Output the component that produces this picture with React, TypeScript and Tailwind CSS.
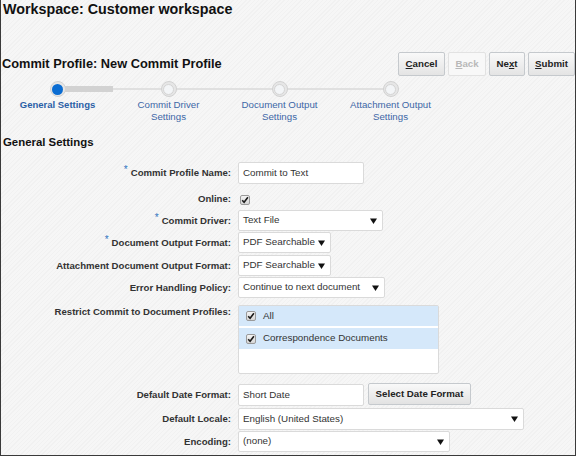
import React from "react";

const font = { fontFamily: '"Liberation Sans", Arial, sans-serif' };

function Arrow() {
  return (
    <svg width="7" height="6" viewBox="0 0 7 6" className="shrink-0">
      <path d="M0 0.5 L7 0.5 L3.5 6 Z" fill="#111" />
    </svg>
  );
}

function Check({ size = 10 }: { size?: number }) {
  return (
    <span
      className="inline-flex items-center justify-center rounded-[2px] border border-[#9a9a9a] bg-gradient-to-b from-[#f4f4f4] to-[#d6d6d6]"
      style={{ width: size, height: size }}
    >
      <svg width="8" height="8" viewBox="0 0 8 8">
        <path d="M1.2 4.2 L3.1 6.2 L6.9 1.3" fill="none" stroke="#1a1a1a" strokeWidth="1.6" />
      </svg>
    </span>
  );
}

function Label({ text, required, top }: { text: string; required?: boolean; top?: boolean }) {
  return (
    <div
      className={`flex w-[230px] shrink-0 justify-end text-[9.6px] font-bold leading-[12px] text-[#333] ${
        top ? "self-start pt-[1px]" : ""
      }`}
    >
      {required ? <span className="mr-[3px] -translate-y-[3px] text-[10px] font-normal text-[#2f74c0]">*</span> : null}
      <span>{text}</span>
    </div>
  );
}

function TextBox({ value, width }: { value: string; width: string }) {
  return (
    <div
      className={`${width} flex h-full items-center rounded-[2px] border border-[#dadada] bg-white px-[4px] text-[9.8px] text-[#333]`}
    >
      {value}
    </div>
  );
}

function Select({ value, width }: { value: string; width: string }) {
  return (
    <div
      className={`${width} flex h-full items-center justify-between rounded-[2px] border border-[#dadada] bg-white pl-[4px] pr-[5px] text-[9.8px] text-[#333]`}
    >
      <span>{value}</span>
      <Arrow />
    </div>
  );
}

function Row({ children, className }: { children: React.ReactNode; className: string }) {
  return <div className={`flex items-center gap-[7px] ${className}`}>{children}</div>;
}

function Btn({ label, u, disabled, w }: { label: string; u: number; disabled?: boolean; w: string }) {
  return (
    <div
      className={`${w} flex h-[24px] items-center justify-center rounded-[2px] border text-[9.7px] font-bold ${
        disabled
          ? "border-[#e2e2e2] bg-[#f8f8f8] text-[#b8b8b8]"
          : "border-[#c5c9cd] bg-gradient-to-b from-[#f9f9f9] to-[#e4e4e4] text-[#222]"
      }`}
    >
      {label.slice(0, u)}
      <span className="underline">{label[u]}</span>
      {label.slice(u + 1)}
    </div>
  );
}

const steps = [
  ["General Settings"],
  ["Commit Driver", "Settings"],
  ["Document Output", "Settings"],
  ["Attachment Output", "Settings"],
];

export default function App() {
  return (
    <div
      style={font}
      className="h-[456px] w-[576px] overflow-hidden border-x border-b border-[#3a3a3a] bg-[#f4f4f4] bg-[repeating-linear-gradient(135deg,#f6f6f6_0px,#f6f6f6_2px,#f1f1f1_2px,#f1f1f1_3px)]"
    >
      <h1 className="pl-[2px] pt-[1px] text-[14.3px] font-bold leading-[17px] text-[#111]">
        Workspace: Customer workspace
      </h1>

      <div className="mt-[34px] flex items-center justify-between pl-[1px] pr-0">
        <h2 className="text-[12.8px] font-bold text-[#111]">Commit Profile: New Commit Profile</h2>
        <div className="flex gap-[3px]">
          <Btn label="Cancel" u={0} w="w-[47px]" />
          <Btn label="Back" u={0} w="w-[38px]" disabled />
          <Btn label="Next" u={2} w="w-[36px]" />
          <Btn label="Submit" u={0} w="w-[47px]" />
        </div>
      </div>

      {/* train */}
      <div className="relative ml-[1px] mt-[5px] flex">
        <div className="absolute left-[55px] top-[7px] h-[2px] w-[333px] bg-[#e0e0e0]" />
        <div className="absolute left-[55px] top-[5px] h-[6px] w-[56px] bg-[#d2d2d2]" />
        {steps.map((s, i) => (
          <div key={i} className="relative flex w-[111px] flex-col items-center">
            <div className="flex h-[16px] w-[16px] items-center justify-center rounded-full border border-[#d2d2d2] bg-[#e6e6e6]">
              <div
                className={`h-[11px] w-[11px] rounded-full ${
                  i === 0 ? "bg-[#0a6cd2]" : "border border-[#d4d4d4] bg-[#f3f5f7]"
                }`}
              />
            </div>
            <div
              className={`mt-[2px] text-center leading-[12px] ${
                i === 0 ? "text-[9.5px] font-bold text-[#2b5fa6]" : "text-[9.7px] text-[#3d67a6]"
              }`}
            >
              {s.map((l) => (
                <div key={l}>{l}</div>
              ))}
            </div>
          </div>
        ))}
      </div>

      <h3 className="mt-[12px] pl-[2px] text-[11.4px] font-bold leading-[14px] text-[#111]">General Settings</h3>

      <div className="mt-[13px] flex flex-col">
        <Row className="h-[22px]">
          <Label text="Commit Profile Name:" required />
          <TextBox value="Commit to Text" width="w-[126px]" />
        </Row>
        <Row className="h-[26px] pt-[4px]">
          <Label text="Online:" />
          <div className="pl-[2px]">
            <Check size={10} />
          </div>
        </Row>
        <Row className="h-[21px]">
          <Label text="Commit Driver:" required />
          <Select value="Text File" width="w-[145px]" />
        </Row>
        <Row className="mt-[1px] h-[21px]">
          <Label text="Document Output Format:" required />
          <Select value="PDF Searchable" width="w-[93px]" />
        </Row>
        <Row className="mt-[2px] h-[21px]">
          <Label text="Attachment Document Output Format:" />
          <Select value="PDF Searchable" width="w-[93px]" />
        </Row>
        <Row className="mt-[1px] h-[21px]">
          <Label text="Error Handling Policy:" />
          <Select value="Continue to next document" width="w-[147px]" />
        </Row>
        <Row className="mt-[7px] h-[69px]">
          <Label text="Restrict Commit to Document Profiles:" top />
          <div className="flex h-full w-[201px] flex-col gap-[2px] self-start rounded-[2px] border border-[#dadada] bg-white">
            <div className="flex h-[20px] items-center gap-[7px] bg-[#d5e8fa] pl-[7px] text-[9.8px] text-[#333]">
              <Check size={10} />
              <span>All</span>
            </div>
            <div className="flex h-[21px] items-center gap-[7px] bg-[#d5e8fa] pl-[7px] text-[9.8px] text-[#333]">
              <Check size={10} />
              <span>Correspondence Documents</span>
            </div>
          </div>
        </Row>
        <Row className="mt-[9px] h-[23px]">
          <Label text="Default Date Format:" />
          <div className="flex h-full items-start gap-[4px]">
            <div className="mt-[1px] h-[22px]">
              <TextBox value="Short Date" width="w-[126px]" />
            </div>
            <div className="flex h-[22px] w-[103px] items-center justify-center rounded-[2px] border border-[#c5c9cd] bg-gradient-to-b from-[#f9f9f9] to-[#e2e2e2] text-[9.7px] font-bold text-[#222]">
              Select Date Format
            </div>
          </div>
        </Row>
        <Row className="mt-[2px] h-[22px]">
          <Label text="Default Locale:" />
          <Select value="English (United States)" width="w-[286px]" />
        </Row>
        <Row className="mt-[1px] h-[21px]">
          <Label text="Encoding:" />
          <Select value="(none)" width="w-[212px]" />
        </Row>
      </div>
    </div>
  );
}
